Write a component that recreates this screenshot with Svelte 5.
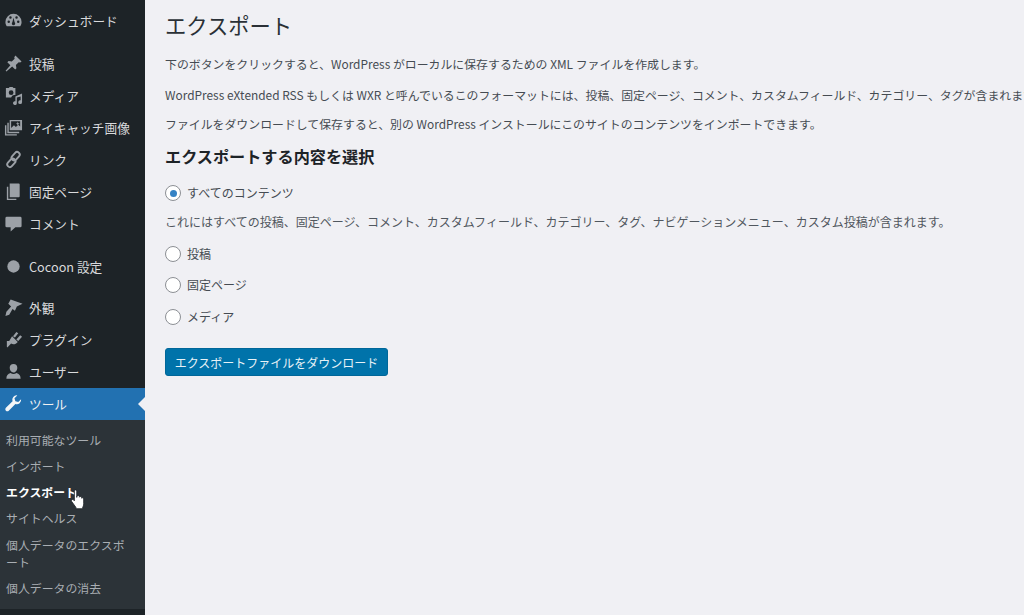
<script>
  const top = [
    { label: 'ダッシュボード', icon: 'dash', gap: 5 },
    { label: '投稿', icon: 'pin', gap: 11 },
    { label: 'メディア', icon: 'media' },
    { label: 'アイキャッチ画像', icon: 'images' },
    { label: 'リンク', icon: 'link' },
    { label: '固定ページ', icon: 'page' },
    { label: 'コメント', icon: 'comment' },
    { label: 'Cocoon 設定', icon: 'dot', gap: 11 },
    { label: '外観', icon: 'brush', gap: 9 },
    { label: 'プラグイン', icon: 'plugin' },
    { label: 'ユーザー', icon: 'user' },
    { label: 'ツール', icon: 'wrench', active: true },
  ]
  const sub = [
    { label: '利用可能なツール' },
    { label: 'インポート' },
    { label: 'エクスポート', current: true },
    { label: 'サイトヘルス' },
    { label: '個人データのエクスポート', wrap: true },
    { label: '個人データの消去' },
  ]
  const paths = {
    dash: 'M10 3a8.5 8.5 0 0 0-8.5 8.5c0 1.8.5 3.3 1.4 4.5h14.2c.9-1.2 1.4-2.7 1.4-4.5A8.500 8.500 0 0 0 10 3zM5 12.500a1.300 1.300 0 1 1 0-2.600 1.300 1.300 0 0 1 0 2.600zM6.800 8.200a1.300 1.300 0 1 1 0-2.600 1.300 1.300 0 0 1 0 2.600zM10 15a1.800 1.800 0 0 1-1.200-3.100L10 7l1.200 4.900A1.800 1.800 0 0 1 10 15zm3.200-6.800a1.300 1.300 0 1 1 0-2.600 1.300 1.300 0 0 1 0 2.600zm1.800 4.300a1.300 1.300 0 1 1 0-2.600 1.300 1.300 0 0 1 0 2.600z',
    pin: 'M12 1.500l6.500 6.500-1.500 1-1.500-.4-3 3 .6 3.400-1.300 1.300-3.200-3.200L2.500 18.500l-.8-.8 5-5.800-3.200-3.200 1.300-1.300 3.400.6 3-3-.4-1.500z',
    media: 'M2 2h3l1-1h3l1 1h2v7.500h-1.500a4 4 0 0 0-3 2.500H2zm5.500 2.500a2.500 2.500 0 1 0 0 5 2.500 2.500 0 0 0 0-5zM19 8v9a2 2 0 1 1-1.500-1.900V11l-4 1v6a2 2 0 1 1-1.500-1.900V11z',
    images: 'M6 2h13v11H6zm1.500 1.500v7l3-3 2 2 2.500-2.500 2 2V3.500zM3.500 5H5v9.500h11V16H3.500zM1 7.500h1.500v9.500h11V18.500H1zM14.500 4l.6 1.400 1.400.6-1.400.6-.6 1.400-.6-1.400-1.400-.6 1.400-.6z',
    page: 'M6 1.500h9.500a1 1 0 0 1 1 1v12.500a1 1 0 0 1-1 1H6zM3 5h1.500v12.500H13V19H3z',
    comment: 'M3 3h14a1.500 1.500 0 0 1 1.500 1.500v8A1.500 1.500 0 0 1 17 14h-5l-5 4.500V14H3a1.500 1.500 0 0 1-1.500-1.500v-8A1.500 1.500 0 0 1 3 3z',
    dot: 'M10 3.500a6.500 6.500 0 1 0 0 13 6.500 6.500 0 0 0 0-13z',
    brush: 'M7 1.500L19.500 6 13.500 9 11.500 13.500 9 11.500 5.500 17.500 1.500 19 2.500 14.500 7.500 9 4.500 6z',
    plugin: 'M8.500 6.500l6 6c-2.200 2.700-5 2.900-7 1.700L3.500 18.500 3 17.500V11.500h2.500zM9.500 6.500l3.500-4.500 2 1.500-3.500 4.500zM13 10l4-4.500 2 1.500-4 4.500z',
    user: 'M10 2a4 4 0 0 1 4 4c0 2.500-1.500 5-4 5S6 8.500 6 6a4 4 0 0 1 4-4zM2.500 17.500c0-3.500 1.500-5 4.500-6 .8.800 1.800 1.200 3 1.200s2.200-.4 3-1.200c3 1 4.500 2.500 4.500 6z',
    wrench: 'M14 1.500a4.500 4.500 0 0 0-5 6L2 14.500c-.8.800-.8 2.200 0 3s2.200.8 3 0l7-7a4.500 4.500 0 0 0 6-5l-3 3-3-1-1-3z',
  }
</script>

<div class="page">
  <nav class="side">
    {#each top as item}
      <div class="item" class:active={item.active} style="margin-top:{item.gap ?? 0}px">
        <svg class="icon" viewBox="0 0 20 20">
          {#if item.icon === 'link'}
            <g class="chain">
              <rect x="9.500" y="1.500" width="5.500" height="10" rx="2.700" transform="rotate(42 12.200 6.500)" />
              <rect x="5" y="8.500" width="5.500" height="10" rx="2.700" transform="rotate(42 7.700 13.500)" />
            </g>
          {:else}
            <path d={paths[item.icon]} fill-rule="evenodd" />
          {/if}
        </svg>
        <span>{item.label}</span>
      </div>
    {/each}
    <div class="sub">
      {#each sub as s}
        <div class="sub-item" class:current={s.current} class:wrap={s.wrap}>
          {s.label}
          {#if s.current}
            <svg class="hand" viewBox="0 0 14 20">
              <path d="M4 2c0-1.500 2.300-1.500 2.300 0v6l.2-1.200c.4-1 2-1 2.200.2l.1.800c.4-1 2-.8 2.100.3l.1.700c.5-.8 1.900-.5 1.900.7v4.500c0 1.800-.6 2.700-1 3.500v1.300H5.500v-1.300L1.500 12c-1-1.300.5-2.800 1.700-1.700L4 11.200z" fill="#fff" stroke="#1d2327" stroke-width="0.800" />
            </svg>
          {/if}
        </div>
      {/each}
    </div>
  </nav>

  <main class="main">
    <h1>エクスポート</h1>
    <p class="first">下のボタンをクリックすると、WordPress がローカルに保存するための XML ファイルを作成します。</p>
    <p>WordPress eXtended RSS もしくは WXR と呼んでいるこのフォーマットには、投稿、固定ページ、コメント、カスタムフィールド、カテゴリー、タグが含まれます。</p>
    <p class="third">ファイルをダウンロードして保存すると、別の WordPress インストールにこのサイトのコンテンツをインポートできます。</p>
    <h2>エクスポートする内容を選択</h2>
    <div class="radio lead"><span class="dot checked"></span>すべてのコンテンツ</div>
    <p class="note">これにはすべての投稿、固定ページ、コメント、カスタムフィールド、カテゴリー、タグ、ナビゲーションメニュー、カスタム投稿が含まれます。</p>
    <div class="radio tight"><span class="dot"></span>投稿</div>
    <div class="radio tight"><span class="dot"></span>固定ページ</div>
    <div class="radio"><span class="dot"></span>メディア</div>
    <button class="btn">エクスポートファイルをダウンロード</button>
  </main>
</div>

<style>
  :global(body) {
    margin: 0;
    background: #f0f0f4;
    overflow: hidden;
  }
  .page {
    display: flex;
    height: 615px;
    overflow: hidden;
    font-family: 'Noto Sans CJK JP', 'Noto Sans', sans-serif;
    color: #454b52;
  }
  .side {
    width: 145px;
    flex: none;
    background: #1d2327;
    color: #d9dadc;
    display: flex;
    flex-direction: column;
  }
  .item {
    height: 32px;
    box-sizing: border-box;
    padding: 0 0 2px 4px;
    flex: none;
    display: flex;
    align-items: center;
    font-size: 12.7px;
    gap: 6px;
    position: relative;
  }
  .icon {
    width: 19px;
    height: 19px;
    fill: #9ca1a7;
    flex: none;
  }
  .chain rect {
    fill: none;
    stroke: #9ca1a7;
    stroke-width: 2;
  }
  .item.active {
    background: #2271b1;
    color: #f0f0f1;
  }
  .item.active .icon {
    fill: #f4f6f8;
  }
  .item.active::after {
    content: '';
    position: absolute;
    right: 0;
    top: 9px;
    border: 7px solid transparent;
    border-right-color: #f0f0f4;
    border-left: 0;
  }
  .sub {
    background: #2c3338;
    padding: 7px 20px 7px 6px;
    height: 175px;
    flex: none;
    color: #a9aeb3;
    font-size: 11.9px;
    line-height: 17px;
  }
  .sub-item {
    padding: 4px 0 5px;
    position: relative;
  }
  .sub-item.wrap {
    margin-top: 1px;
  }
  .sub-item.current {
    color: #fff;
    font-weight: 700;
  }
  .hand {
    position: absolute;
    left: 64px;
    top: 10px;
    width: 15px;
    height: 21px;
  }
  .main {
    flex: 1;
    min-width: 0;
    padding-left: 20px;
    font-size: 12px;
  }
  h1 {
    font-size: 21.300px;
    font-weight: 400;
    line-height: 30px;
    margin: 10px 0 0;
    color: #2a3036;
  }
  p {
    margin: 13px 0 0;
    line-height: 18px;
    white-space: nowrap;
    font-size: 11.9px;
  }
  p.first {
    margin-top: 15px;
  }
  p.third {
    margin-top: 11px;
  }
  h2 {
    font-size: 16.150px;
    font-weight: 700;
    line-height: 22px;
    margin: 12px 0 0;
    color: #1d2327;
  }
  .radio {
    display: flex;
    align-items: center;
    gap: 6px;
    height: 18px;
    margin-top: 14px;
  }
  .radio.lead {
    margin-top: 16px;
  }
  .radio.tight {
    margin-top: 13px;
  }
  p.note {
    color: #50575e;
    margin-top: 12px;
    font-size: 12px;
  }
  .dot {
    width: 14px;
    height: 14px;
    margin-top: 2px;
    border: 1px solid #8c8f94;
    border-radius: 50%;
    background: #fff;
    flex: none;
    display: grid;
    place-items: center;
  }
  .dot.checked::before {
    content: '';
    width: 7px;
    height: 7px;
    border-radius: 50%;
    background: #3582c4;
  }
  .btn {
    display: block;
    margin-top: 23px;
    width: 223px;
    height: 28px;
    padding: 0;
    background: #0073aa;
    color: #e8f2f7;
    border: 1px solid #006799;
    border-radius: 3px;
    font: inherit;
    font-size: 12px;
  }
</style>
